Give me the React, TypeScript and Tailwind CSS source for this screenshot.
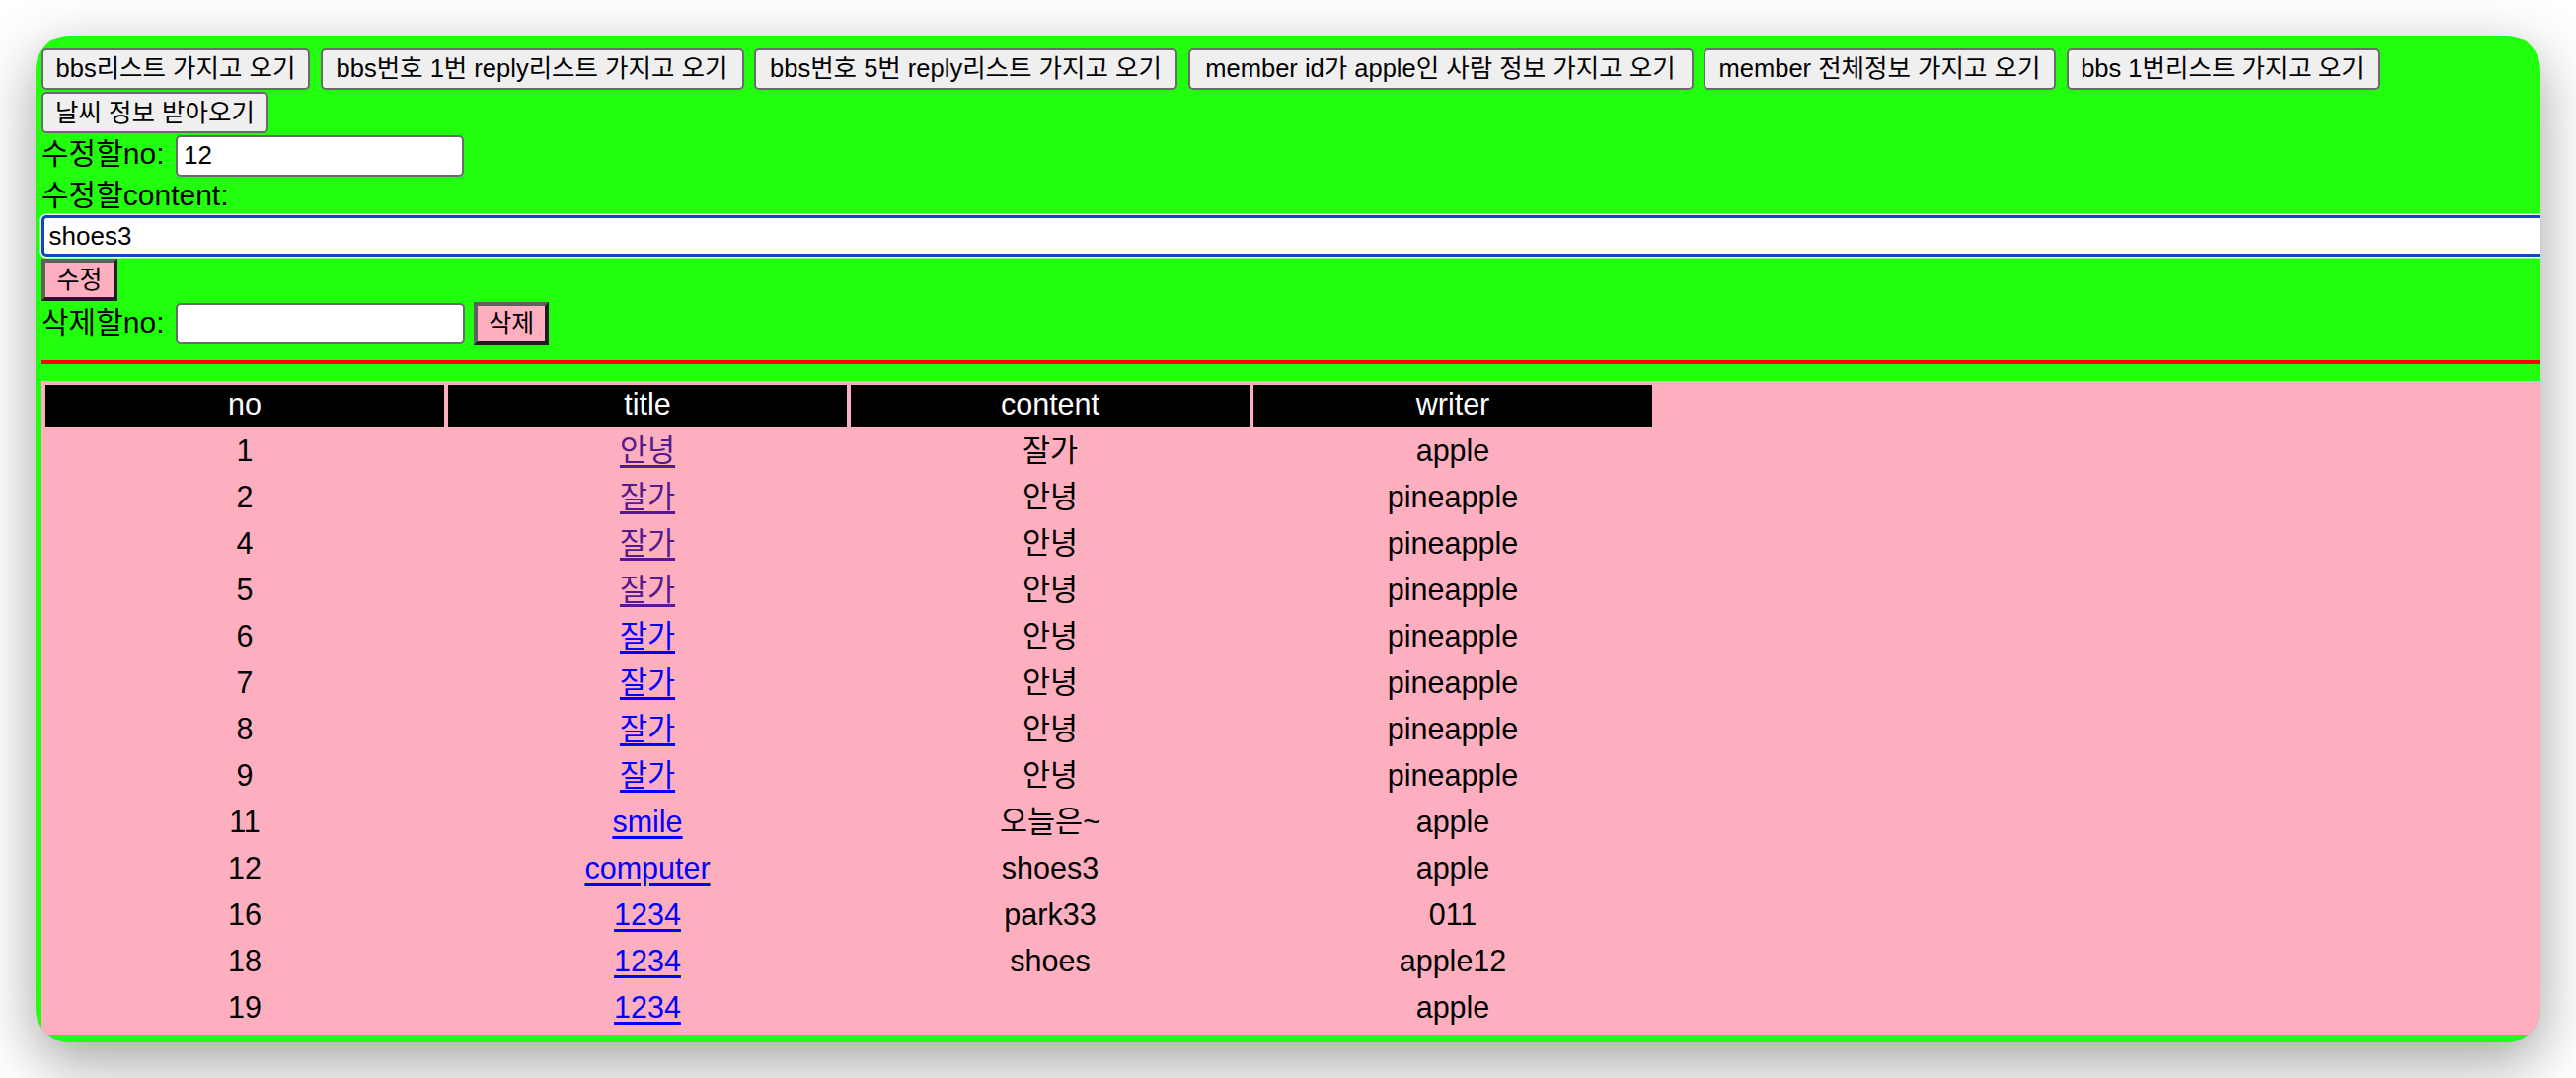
const topButtons = [
  { label: "bbs리스트 가지고 오기", w: "w-[272px]" },
  { label: "bbs번호 1번 reply리스트 가지고 오기", w: "w-[429px]" },
  { label: "bbs번호 5번 reply리스트 가지고 오기", w: "w-[429px]" },
  { label: "member id가 apple인 사람 정보 가지고 오기", w: "w-[512px]" },
  { label: "member 전체정보 가지고 오기", w: "w-[357px]" },
  { label: "bbs 1번리스트 가지고 오기", w: "w-[317px]" },
  { label: "날씨 정보 받아오기", w: "w-[230px]" },
];

interface Row {
  no: string;
  title: string;
  content: string;
  writer: string;
  visited?: boolean;
}

const rows: Row[] = [
  { no: "1", title: "안녕", content: "잘가", writer: "apple", visited: true },
  { no: "2", title: "잘가", content: "안녕", writer: "pineapple", visited: true },
  { no: "4", title: "잘가", content: "안녕", writer: "pineapple", visited: true },
  { no: "5", title: "잘가", content: "안녕", writer: "pineapple", visited: true },
  { no: "6", title: "잘가", content: "안녕", writer: "pineapple" },
  { no: "7", title: "잘가", content: "안녕", writer: "pineapple" },
  { no: "8", title: "잘가", content: "안녕", writer: "pineapple" },
  { no: "9", title: "잘가", content: "안녕", writer: "pineapple" },
  { no: "11", title: "smile", content: "오늘은~", writer: "apple" },
  { no: "12", title: "computer", content: "shoes3", writer: "apple" },
  { no: "16", title: "1234", content: "park33", writer: "011" },
  { no: "18", title: "1234", content: "shoes", writer: "apple12" },
  { no: "19", title: "1234", content: "", writer: "apple" },
];

function PinkButton({ label, w }: { label: string; w: string }) {
  return (
    <button
      className={`${w} h-[43.5px] bg-[#fdafc0] border-[4px] border-t-[#5f5f5f] border-l-[#5f5f5f] border-b-[#1c1c1c] border-r-[#1c1c1c] text-[25px] leading-none flex items-center justify-center`}
    >
      {label}
    </button>
  );
}

export default function App() {
  return (
    <div className="w-[2610px] h-[1092px] bg-white pt-[36px] pl-[36px] font-['Liberation_Sans','Noto_Sans_CJK_KR',sans-serif] text-black">
      <div className="w-[2538px] h-[1020px] rounded-[34px] overflow-hidden bg-[#21ff0e] shadow-[0_20px_60px_2px_rgba(0,0,0,0.35)] flex flex-col pl-[6px] pt-[12.7px]">
        <div className="flex flex-wrap gap-x-[10.5px] gap-y-[2.6px] w-[2532px]">
          {topButtons.map((b) => (
            <button
              key={b.label}
              className={`${b.w} h-[42px] rounded-[5px] border-2 border-[#6b6b6b] bg-[#efefef] text-[25.5px] leading-none whitespace-nowrap flex items-center justify-center`}
            >
              {b.label}
            </button>
          ))}
        </div>

        <div className="flex items-baseline mt-[1.4px] h-[42px]">
          <span className="w-[136px] text-[30px] leading-none">수정할no:</span>
          <input
            readOnly
            defaultValue="12"
            className="w-[292px] h-[42px] rounded-[5px] border-2 border-[#6b6b6b] bg-white pl-[6px] text-[26px] outline-none"
          />
        </div>

        <div className="h-[38px] flex items-center text-[30px] leading-none">수정할content:</div>

        <div className="py-[1.5px]">
          <input
            readOnly
            defaultValue="shoes3"
            className="w-[2600px] h-[42px] rounded-[5px] border-[3.5px] border-[#0c48c4] bg-white pl-[4.5px] text-[26px] outline-none shadow-[0_0_0_1.5px_white]"
          />
        </div>

        <div className="flex">
          <PinkButton label="수정" w="w-[77px]" />
        </div>

        <div className="flex items-center h-[44.5px]">
          <span className="w-[136px] text-[30px] leading-none">삭제할no:</span>
          <input
            readOnly
            className="w-[293px] h-[41px] rounded-[5px] border-2 border-[#6b6b6b] bg-white outline-none"
          />
          <div className="ml-[9.3px]">
            <PinkButton label="삭제" w="w-[76px]" />
          </div>
        </div>

        <div className="mt-[15.7px] h-[4px] bg-[#ff0000]" />

        <div className="mt-[16.3px] h-[662px] bg-[#fdafc0]">
          <table className="border-separate border-spacing-[4px] text-[30.5px] leading-[34px]">
            <thead>
              <tr>
                {["no", "title", "content", "writer"].map((h) => (
                  <th key={h} className="w-[404px] h-[43px] p-0 pb-[5px] bg-black text-white font-normal text-center align-middle">
                    {h}
                  </th>
                ))}
              </tr>
            </thead>
            <tbody>
              {rows.map((r) => (
                <tr key={r.no}>
                  <td className="h-[43px] p-0 pb-[5px] text-center align-middle">{r.no}</td>
                  <td className="h-[43px] p-0 pb-[5px] text-center align-middle">
                    <a
                      href="#"
                      className={`underline decoration-[2.5px] underline-offset-[4px] ${r.visited ? "text-[#551a8b]" : "text-[#0000ff]"}`}
                    >
                      {r.title}
                    </a>
                  </td>
                  <td className="h-[43px] p-0 pb-[5px] text-center align-middle">{r.content}</td>
                  <td className="h-[43px] p-0 pb-[5px] text-center align-middle">{r.writer}</td>
                </tr>
              ))}
            </tbody>
          </table>
        </div>
      </div>
    </div>
  );
}
